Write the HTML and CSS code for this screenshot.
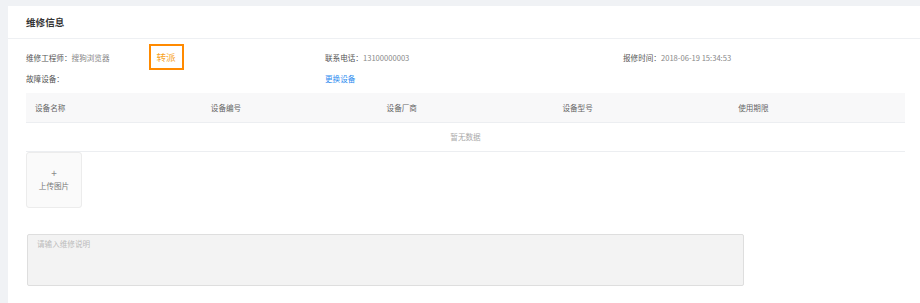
FILE: index.html
```html
<!DOCTYPE html>
<html lang="zh-CN">
<head>
    <meta charset="UTF-8">
    <meta name="viewport" content="width=device-width, initial-scale=1.0">
    <title>维修信息</title>
    <link rel="stylesheet" href="styles.css">
</head>
<body>
    <div class="page">
        <div class="card">
            <div class="card-head">维修信息</div>
            <div class="card-body">
                <!-- 基本信息 -->
                <div class="info">
                    <div class="cell">
                        <span class="label">维修工程师：</span><span class="value">搜狗浏览器</span>
                        <button class="btn-transfer">转派</button>
                    </div>
                    <div class="cell"><span class="label">联系电话：</span><span class="value">13100000003</span></div>
                    <div class="cell"><span class="label">报修时间：</span><span class="value">2018-06-19 15:34:53</span></div>
                </div>
                <div class="info info-second">
                    <div class="cell"><span class="label">故障设备：</span></div>
                    <div class="cell"><a href="#" class="link">更换设备</a></div>
                    <div class="cell"></div>
                </div>

                <!-- 设备列表 -->
                <table class="device-table">
                    <thead>
                        <tr>
                            <th>设备名称</th>
                            <th>设备编号</th>
                            <th>设备厂商</th>
                            <th>设备型号</th>
                            <th>使用期限</th>
                        </tr>
                    </thead>
                    <tbody>
                        <tr>
                            <td colspan="5" class="empty">暂无数据</td>
                        </tr>
                    </tbody>
                </table>

                <div class="upload">
                    <span class="plus">+</span>
                    <span class="upload-text">上传图片</span>
                </div>

                <textarea class="remark" placeholder="请输入维修说明"></textarea>
            </div>
        </div>
    </div>
</body>
</html>
```

FILE: styles.css
```css
* {
    box-sizing: border-box;
}
body {
    margin: 0;
    background: #f0f2f5;
    font-family: "Noto Sans CJK SC", "Noto Sans", sans-serif;
    font-size: 7.6px;
    color: #555;
}
.page {
    padding: 6px 0 0 8px;
    height: 303px;
    overflow: hidden;
}
.card {
    background: #fff;
    height: 100%;
}
.card-head {
    height: 33px;
    line-height: 32px;
    padding: 0 18px;
    font-size: 9.6px;
    font-weight: bold;
    color: #333;
    border-bottom: 1px solid #eef0f3;
}
.card-body {
    padding: 5px 15px 0 18px;
}
.info {
    display: grid;
    grid-template-columns: 299px 298px 1fr;
    align-items: center;
    height: 26px;
}
.info-second {
    height: 12px;
    margin-top: 2px;
}
.cell {
    display: flex;
    align-items: center;
    white-space: nowrap;
}
.label {
    color: #555;
}
.value {
    color: #888;
}
.btn-transfer {
    margin-left: 39px;
    width: 35px;
    height: 26px;
    padding: 0;
    background: #fff;
    border: 2px solid #ff8a00;
    color: #f7a21b;
    font-family: inherit;
    font-size: 9.6px;
    cursor: pointer;
}
.link {
    color: #2d8cf0;
    text-decoration: none;
}
.device-table {
    width: 879px;
    margin-top: 9px;
    border-collapse: collapse;
    table-layout: fixed;
}
.device-table th {
    height: 29px;
    padding: 0 9px;
    text-align: left;
    font-weight: normal;
    color: #666;
    background: #f8f8f9;
    border-bottom: 1px solid #eceef1;
}
.device-table td {
    height: 29px;
    border-bottom: 1px solid #eceef1;
}
.device-table .empty {
    text-align: center;
    color: #aaa;
}
.upload {
    width: 56px;
    height: 56px;
    background: #fafafa;
    border: 1px solid #ececec;
    border-radius: 3px;
    display: flex;
    flex-direction: column;
    align-items: center;
    justify-content: center;
    gap: 2px;
    color: #777;
}
.upload .plus {
    font-size: 10px;
    line-height: 10px;
    color: #888;
}
.upload-text {
    line-height: 11px;
}
.remark {
    display: block;
    margin: 26px 0 0 1px;
    width: 717px;
    height: 52px;
    padding: 3px 9px;
    background: #f3f3f3;
    border: 1px solid #dedede;
    border-radius: 2px;
    resize: none;
    font-family: inherit;
    font-size: 7.6px;
    color: #555;
}
.remark::placeholder {
    color: #bbb;
}
```
